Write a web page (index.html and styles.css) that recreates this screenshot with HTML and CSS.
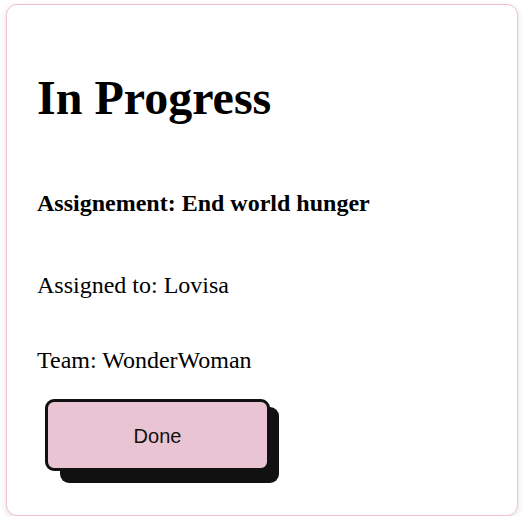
FILE: index.html
```html
<!DOCTYPE html>
<html>
<head>
<meta charset="utf-8">
<link rel="stylesheet" href="styles.css">
</head>
<body>
<div class="card">
  <h1 class="title">In Progress</h1>
  <h2 class="assignment">Assignement: End world hunger</h2>
  <p class="info info-first">Assigned to: Lovisa</p>
  <p class="info info-team">Team: WonderWoman</p>
  <button class="done-btn">Done</button>
</div>
</body>
</html>
```
FILE: styles.css
```css
html, body {
  margin: 0;
  padding: 0;
  background: #ffffff;
}
body {
  padding: 4px 0 0 6px;
  font-family: "Liberation Serif", "Times New Roman", serif;
  color: #000;
}
.card {
  position: relative;
  isolation: isolate;
  box-sizing: border-box;
  width: 512px;
  height: 512px;
  border: 1px solid #f0c3d2;
  border-radius: 11px;
  background: #fff;
  box-shadow: 0 2px 6px rgba(0, 0, 0, 0.13);
  padding: 0 30px;
  display: flex;
  flex-direction: column;
  align-items: flex-start;
}
.title {
  font-size: 48px;
  line-height: 56px;
  font-weight: bold;
  margin: 65px 0 0 0;
}
.assignment {
  font-size: 24px;
  line-height: 28px;
  font-weight: bold;
  margin: 63px 0 0 0;
}
.info {
  font-size: 24px;
  line-height: 28px;
  margin: 0;
}
.info-first {
  margin-top: 54px;
}
.info-team {
  margin-top: 47px;
}
.done-btn {
  position: relative;
  box-sizing: border-box;
  margin: 25px 0 0 8px;
  width: 225px;
  height: 72px;
  border: 3px solid #111;
  border-radius: 9px;
  background: #e9c4d2;
  color: #111;
  font-family: "Liberation Sans", Arial, sans-serif;
  font-size: 20px;
  padding: 3px 0 0 0;
  cursor: pointer;
}
.done-btn::before {
  content: "";
  position: absolute;
  left: 12px;
  top: 5px;
  width: 219px;
  height: 76px;
  background: #111;
  border-radius: 9px;
  z-index: -1;
}
```
